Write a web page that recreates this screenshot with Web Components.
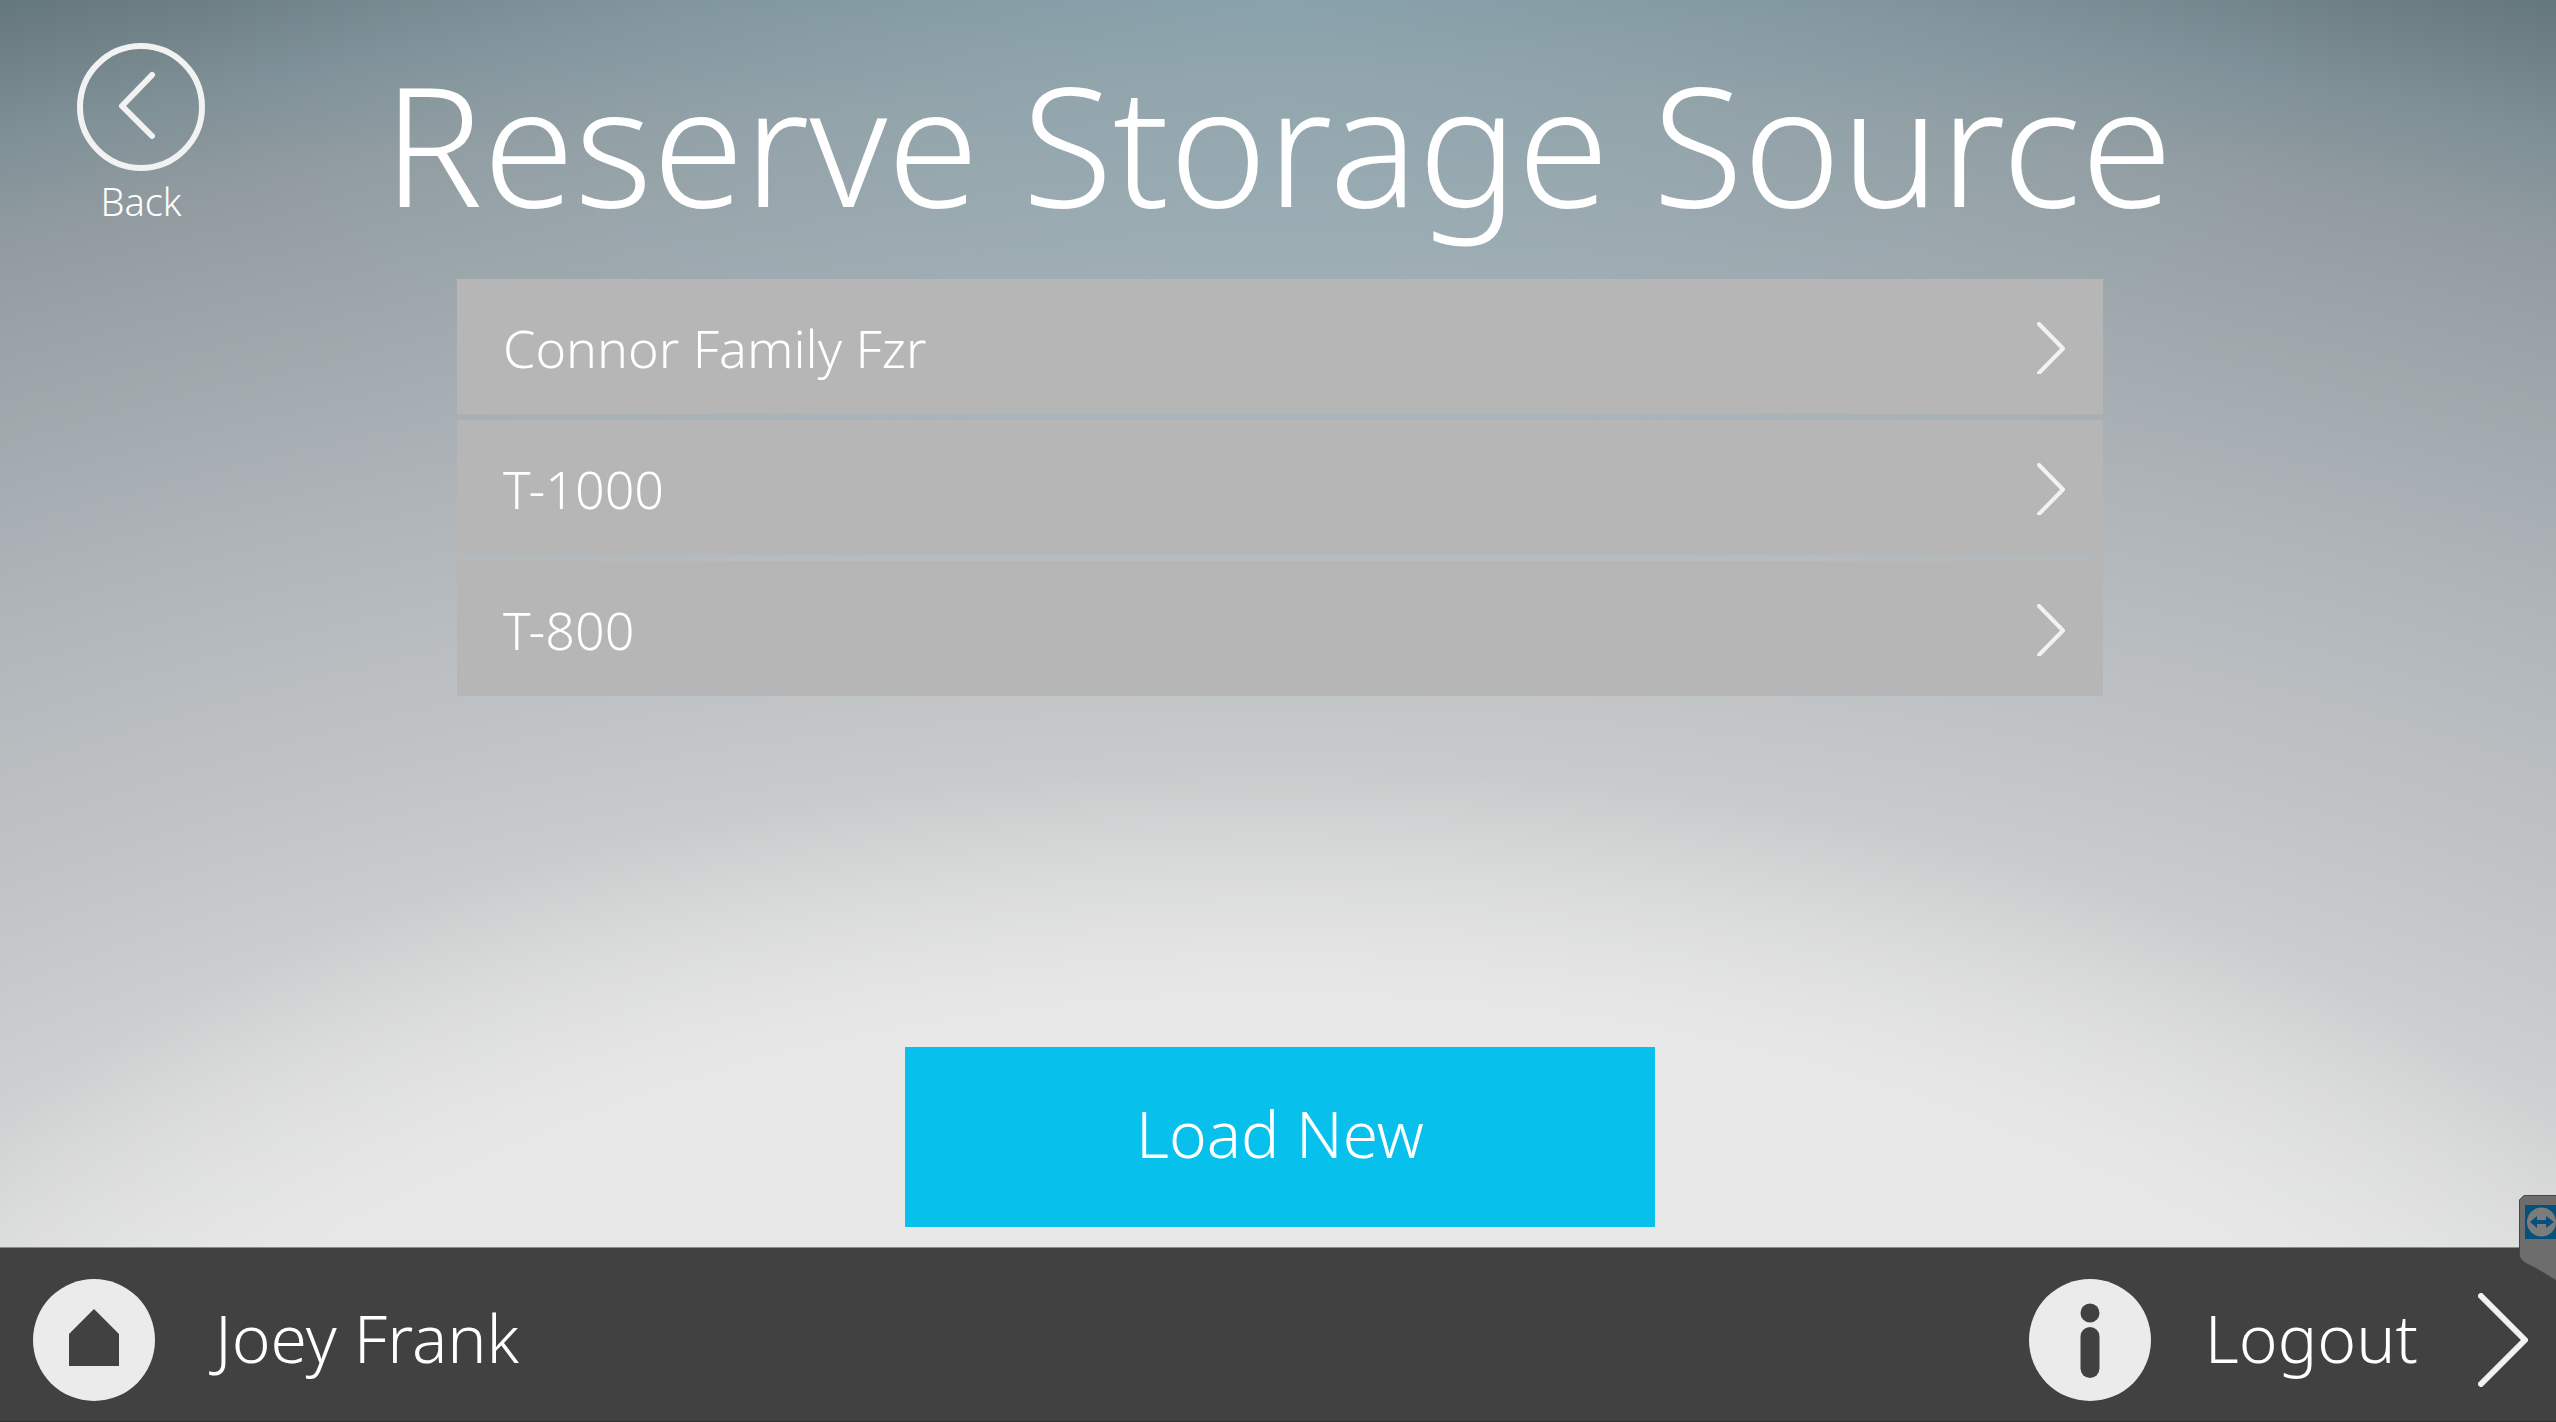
<!DOCTYPE html>
<html lang="en">
<head>
<meta charset="utf-8">
<meta name="viewport" content="width=device-width, initial-scale=1">
<title>Reserve Storage Source</title>
<style>
  body {
    margin: 0;
    color: #fff;
    font-family: "Noto Sans", "Open Sans", sans-serif;
    font-weight: 300;
  }
</style>
</head>
<body>

<kiosk-screen>
  <kiosk-header slot="header" heading="Reserve Storage Source"></kiosk-header>
  <source-list>
    <source-item>Connor Family Fzr</source-item>
    <source-item>T-1000</source-item>
    <source-item>T-800</source-item>
  </source-list>
  <action-button slot="action">Load New</action-button>
  <kiosk-footer slot="footer">
    <span slot="user">Joey Frank</span>
    <span slot="logout">Logout</span>
  </kiosk-footer>
</kiosk-screen>
<remote-tab></remote-tab>

<script>
class KioskScreen extends HTMLElement {
    constructor() {
        super();
        this.attachShadow({ mode: "open" });
        this.shadowRoot.innerHTML = `
      <style>
        :host {
          display: flex;
          flex-direction: column;
          min-height: 100vh;
          background:
            radial-gradient(ellipse 56% 46% at 50% 100%,
              #e7e8e7 62%, rgba(231, 232, 231, 0.5) 79%, rgba(231, 232, 231, 0) 100%),
            radial-gradient(ellipse 42% 50% at 50% 0%, rgba(146, 184, 198, 0.42), rgba(166, 192, 204, 0) 100%),
            radial-gradient(ellipse 152% 183% at 50% 169%,
              #e4e5e5 51%, #dadbdb 55%, #cecfd0 60%, #c4c6c7 65%,
              #bbbfc2 70%, #a7aeb3 80%, #929ca0 89%, #7f9097 93%, #64777c 98%);
        }
        main {
          flex: 1;
          display: flex;
          flex-direction: column;
          justify-content: space-between;
          align-items: center;
          padding: 0 0 20px 4px;
        }
        ::slotted(source-list) { width: 64.5%; }
      </style>
      <slot name="header"></slot>
      <main>
        <slot></slot>
        <slot name="action"></slot>
      </main>
      <slot name="footer"></slot>
    `;
    }
}

class KioskHeader extends HTMLElement {
    constructor() {
        super();
        this.attachShadow({ mode: "open" });
        this.shadowRoot.innerHTML = `
      <style>
        :host {
          display: grid;
          grid-template-columns: 1fr auto 1fr;
          align-items: start;
          height: 279px;
        }
        button {
          justify-self: start;
          display: flex;
          flex-direction: column;
          align-items: center;
          margin: 42px 0 0 76px;
          padding: 0;
          border: 0;
          background: none;
          color: inherit;
          font: inherit;
          font-size: 38px;
          line-height: 58px;
          cursor: pointer;
        }
        svg { display: block; width: 130px; height: 130px; }
        h1 {
          margin: 0;
          font-size: 166px;
          font-weight: 300;
          line-height: 286px;
          white-space: nowrap;
        }
      </style>
      <button type="button">
        <svg viewBox="0 0 130 130" fill="none" stroke="#f2f2f2" stroke-width="6" aria-hidden="true">
          <circle cx="65" cy="65" r="61"/>
          <path d="M76 33 46 64 76 94" stroke-linecap="round" stroke-linejoin="round"/>
        </svg>
        Back
      </button>
      <h1></h1>
    `;
    }

    connectedCallback() {
        this.shadowRoot.querySelector("h1").textContent = this.getAttribute("heading");
    }
}

class SourceList extends HTMLElement {
    constructor() {
        super();
        this.attachShadow({ mode: "open" });
        this.shadowRoot.innerHTML = `
      <style>
        :host { display: flex; flex-direction: column; gap: 6px; }
      </style>
      <slot></slot>
    `;
    }

    connectedCallback() {
        this.setAttribute("role", "list");
    }
}

class SourceItem extends HTMLElement {
    constructor() {
        super();
        this.attachShadow({ mode: "open" });
        this.shadowRoot.innerHTML = `
      <style>
        :host { display: block; }
        button {
          display: flex;
          align-items: center;
          justify-content: space-between;
          width: 100%;
          height: 135px;
          padding: 2px 38px 0 46px;
          border: 0;
          background: #b6b6b6;
          color: inherit;
          font: inherit;
          font-size: 52px;
          line-height: 80px;
          text-align: left;
          cursor: pointer;
        }
        button:hover { background: #adadad; }
        svg { display: block; width: 28px; height: 52px; }
      </style>
      <button type="button">
        <span><slot></slot></span>
        <svg viewBox="0 0 28 52" fill="none" stroke="#f2f2f2" stroke-width="4" aria-hidden="true">
          <path d="M2 2 26 26.500 2 51" stroke-linecap="round" stroke-linejoin="round"/>
        </svg>
      </button>
    `;
    }

    connectedCallback() {
        this.setAttribute("role", "listitem");
    }
}

class ActionButton extends HTMLElement {
    constructor() {
        super();
        this.attachShadow({ mode: "open" });
        this.shadowRoot.innerHTML = `
      <style>
        :host { display: block; }
        button {
          min-width: 750px;
          height: 180px;
          padding: 0 40px 8px;
          border: 0;
          background: #07c1ec;
          color: inherit;
          font: inherit;
          font-size: 64px;
          cursor: pointer;
        }
        button:hover { background: #06b1d9; }
      </style>
      <button type="button"><slot></slot></button>
    `;
    }
}

class KioskFooter extends HTMLElement {
    constructor() {
        super();
        this.attachShadow({ mode: "open" });
        this.shadowRoot.innerHTML = `
      <style>
        :host {
          display: flex;
          align-items: center;
          justify-content: space-between;
          box-sizing: border-box;
          height: 175px;
          padding: 10px 28px 0 33px;
          border-top: 1px solid #8a8a8a;
          border-bottom: 1px solid #382f35;
          background: #414141;
          font-size: 66px;
          line-height: 96px;
        }
        .group { display: flex; align-items: center; gap: 60px; }
        .group.end { gap: 54px; }
        button {
          display: flex;
          align-items: center;
          gap: 60px;
          padding: 0;
          border: 0;
          background: none;
          color: inherit;
          font: inherit;
          cursor: pointer;
        }
        ::slotted(span) { padding-bottom: 6px; }
        svg { display: block; }
        .round { width: 122px; height: 122px; }
        .chevron { width: 50px; height: 94px; }
      </style>
      <div class="group">
        <button type="button" aria-label="Home">
          <svg class="round" viewBox="0 0 122 122" aria-hidden="true">
            <circle cx="61" cy="61" r="61" fill="#ebebeb"/>
            <path d="M61 30 86 55V87H36V55Z" fill="#414141"/>
          </svg>
        </button>
        <slot name="user"></slot>
      </div>
      <div class="group end">
        <button type="button" aria-label="Information">
          <svg class="round" viewBox="0 0 122 122" aria-hidden="true">
            <circle cx="61" cy="61" r="61" fill="#ebebeb"/>
            <circle cx="61" cy="34" r="9.500" fill="#414141"/>
            <rect x="51.500" y="48" width="19" height="51" rx="9.500" fill="#414141"/>
          </svg>
        </button>
        <button type="button">
          <slot name="logout"></slot>
          <svg class="chevron" viewBox="0 0 50 94" fill="none" stroke="#f2f2f2" stroke-width="6" aria-hidden="true">
            <path d="M3 3 47 47 3 91" stroke-linecap="round" stroke-linejoin="round"/>
          </svg>
        </button>
      </div>
    `;
    }
}

// Remote-support handle that sits on top of the page's right edge
class RemoteTab extends HTMLElement {
    constructor() {
        super();
        this.attachShadow({ mode: "open" });
        this.shadowRoot.innerHTML = `
      <style>
        :host { position: fixed; right: 0; bottom: 142px; }
        button { display: block; padding: 0; border: 0; background: none; cursor: pointer; }
        svg { display: block; width: 37px; height: 85px; }
      </style>
      <button type="button" aria-label="Remote session">
        <svg viewBox="0 0 37 85" aria-hidden="true">
          <path d="M0 5 5 0H37V85L17 73 7 68Q0 64 0 56Z" fill="#6d6d6d"/>
          <path d="M.5 60V5L5 .5H37" fill="none" stroke="#454545"/>
          <rect x="6" y="10" width="31" height="34" fill="#05507c"/>
          <circle cx="22.500" cy="27" r="14.500" fill="#7c7c7c"/>
          <path d="M11 27 18 21V25H27V21L35 27 27 33V29H18V33Z" fill="#05507c"/>
        </svg>
      </button>
    `;
    }
}

customElements.define("kiosk-screen", KioskScreen);
customElements.define("kiosk-header", KioskHeader);
customElements.define("source-list", SourceList);
customElements.define("source-item", SourceItem);
customElements.define("action-button", ActionButton);
customElements.define("kiosk-footer", KioskFooter);
customElements.define("remote-tab", RemoteTab);
</script>
</body>
</html>
